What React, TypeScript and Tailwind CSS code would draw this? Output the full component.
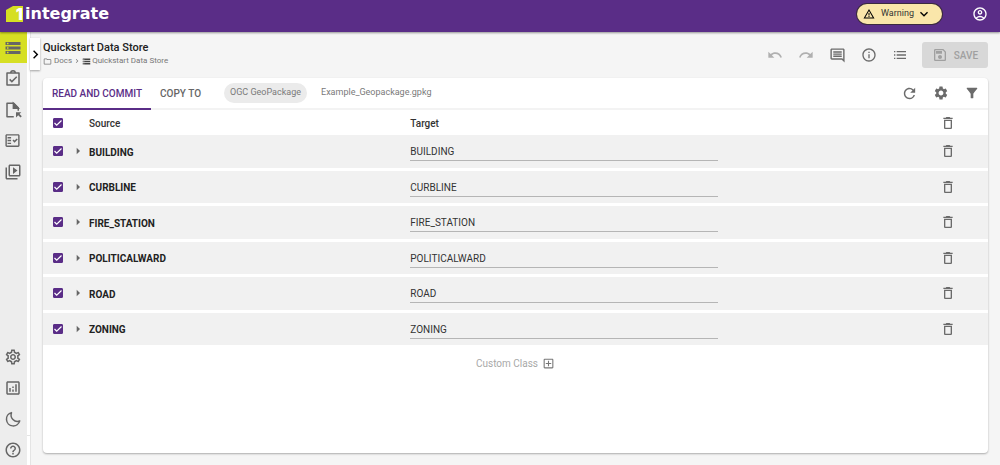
import { useState } from "react";
import type { ReactNode } from "react";
import {
  MdArrowRight,
  MdChevronRight,
  MdDeleteOutline,
  MdFilterAlt,
  MdHelpOutline,
  MdKeyboardArrowDown,
  MdOutlineAccountCircle,
  MdOutlineAddBox,
  MdOutlineAnalytics,
  MdOutlineFactCheck,
  MdOutlineFolder,
  MdOutlineInfo,
  MdOutlineComment,
  MdOutlineSave,
  MdOutlineSettings,
  MdOutlineVideoLibrary,
  MdRedo,
  MdRefresh,
  MdSettings,
  MdStorage,
  MdUndo,
  MdWarningAmber,
} from "react-icons/md";

const classes = [
  "BUILDING",
  "CURBLINE",
  "FIRE_STATION",
  "POLITICALWARD",
  "ROAD",
  "ZONING",
];

const ClipboardIcon = () => (
  <svg width="18" height="18" viewBox="0 0 24 24" fill="none" stroke="currentColor" strokeWidth="2">
    <path d="M4 4h16v16H4z" strokeLinejoin="round" />
    <path d="M9 4a3 3 0 0 1 6 0" />
    <path d="M7.5 12.5l3 3L17 9" />
  </svg>
);

const FileArrowIcon = () => (
  <svg width="18" height="18" viewBox="0 0 24 24" fill="none" stroke="currentColor" strokeWidth="2">
    <path d="M13 21H4V3h9l6 6v4" strokeLinejoin="round" />
    <path d="M12.5 3v6.500H19z" fill="currentColor" />
    <path d="M16 15h7l-2.300 2.300 3 3-1.700 1.700-3-3L16 22z" fill="currentColor" stroke="none" />
  </svg>
);

const MoonIcon = () => (
  <svg width="18" height="18" viewBox="0 0 24 24" fill="none" stroke="currentColor" strokeWidth="2">
    <path d="M10 3.500a9 9 0 1 0 11 11A8.500 8.500 0 0 1 10 3.500z" strokeLinejoin="round" />
  </svg>
);

const ListIcon = () => (
  <svg width="16" height="16" viewBox="0 0 24 24" fill="currentColor">
    <path d="M3 6h2v2H3zM3 11h2v2H3zM3 16h2v2H3zM7 6h14v2H7zM7 11h14v2H7zM7 16h14v2H7z" />
  </svg>
);

type NavButtonProps = {
  label: string;
  active?: boolean;
  children: ReactNode;
};

const NavButton = ({ label, active, children }: NavButtonProps) => (
  <button
    type="button"
    aria-label={label}
    className={`flex h-[31px] w-full items-center justify-center pr-0.5 text-[#666] ${
      active ? "bg-[#d6df23]" : ""
    }`}
  >
    {children}
  </button>
);

type CheckProps = {
  label: string;
  checked: boolean;
  onChange: () => void;
};

const Check = ({ label, checked, onChange }: CheckProps) => (
  <label className="relative block size-2.5">
    <input
      type="checkbox"
      aria-label={label}
      checked={checked}
      onChange={onChange}
      className="block size-2.5 appearance-none rounded-[1px] border border-[#5a2d87] checked:bg-[#5a2d87]"
    />
    {checked && (
      <svg
        viewBox="0 0 10 10"
        className="pointer-events-none absolute inset-0 size-2.5"
        fill="none"
        stroke="white"
        strokeWidth="1.200"
      >
        <path d="M1.500 5l2.200 2.200L8.500 2.500" />
      </svg>
    )}
  </label>
);

const Logo = () => (
  <a href="#" aria-label="1integrate" className="flex items-center gap-0.5 text-white">
    <span className="relative flex h-4 w-[17px] items-end justify-end">
      <svg viewBox="0 0 17 16" className="absolute inset-0 h-4 w-[17px]">
        <path d="M0 4 7 0h10v16H0z" fill="#d6df23" />
      </svg>
      <span className="relative font-[Inter] text-base leading-4 font-black">1</span>
    </span>
    <span className="font-['DejaVu_Sans'] text-base leading-4 font-bold">integrate</span>
  </a>
);

export default function App() {
  const [selected, setSelected] = useState<string[]>(classes);

  const toggle = (name: string) => {
    setSelected((prev) =>
      prev.includes(name) ? prev.filter((n) => n !== name) : [...prev, name],
    );
  };

  const allSelected = selected.length === classes.length;

  return (
    <div className="flex h-screen flex-col bg-[#f5f5f5] font-[Roboto,sans-serif] text-[#333]">
      {/* Top bar */}
      <header className="z-10 flex h-8 shrink-0 items-center justify-between bg-[#5a2d87] pr-3 pb-1 pl-1.5 shadow-[0_1px_2px_rgba(0,0,0,0.4)]">
        <Logo />
        <div className="flex items-center gap-[30px]">
          <button
            type="button"
            className="flex h-5 items-center rounded-full bg-[#fae6aa] pr-2.5 pl-1.5 text-[9px] text-[#333] ring-1 ring-[#3b2a3f]"
          >
            <MdWarningAmber size={12} className="text-black" />
            <span className="mr-0.5 ml-1.5">Warning</span>
            <MdKeyboardArrowDown size={16} className="text-black" />
          </button>
          <button type="button" aria-label="Account" className="text-white">
            <MdOutlineAccountCircle size={16} />
          </button>
        </div>
      </header>

      <div className="flex min-h-0 flex-1">
        {/* Sidebar */}
        <nav className="flex w-[27px] shrink-0 flex-col justify-between bg-[#ededed]">
          <div>
            <NavButton label="Data stores" active>
              <MdStorage size={18} />
            </NavButton>
            <NavButton label="Rules">
              <ClipboardIcon />
            </NavButton>
            <NavButton label="Actions">
              <FileArrowIcon />
            </NavButton>
            <NavButton label="Action maps">
              <MdOutlineFactCheck size={17} />
            </NavButton>
            <NavButton label="Sessions">
              <MdOutlineVideoLibrary size={18} />
            </NavButton>
          </div>
          <div>
            <NavButton label="Settings">
              <MdOutlineSettings size={18} />
            </NavButton>
            <NavButton label="Reports">
              <MdOutlineAnalytics size={18} />
            </NavButton>
            <NavButton label="Dark mode">
              <MoonIcon />
            </NavButton>
            <NavButton label="Help">
              <MdHelpOutline size={18} />
            </NavButton>
          </div>
        </nav>

        {/* Collapsed panel */}
        <aside className="relative flex w-1 shrink-0 flex-col justify-end border-r border-[#e4e4e4] bg-white">
          <div className="h-[30px] border-t border-[#e4e4e4]" />
          <button
            type="button"
            aria-label="Expand panel"
            className="absolute top-1.5 left-[3px] flex h-8 w-2.5 items-center justify-center bg-white text-black shadow-[0_1px_2px_rgba(0,0,0,0.35)]"
          >
            <MdChevronRight size={17} className="shrink-0" />
          </button>
        </aside>

        <main className="flex min-w-0 flex-1 flex-col pr-3 pb-3 pl-3">
          {/* Title and page actions */}
          <div className="flex h-[46px] shrink-0 items-center justify-between">
            <div className="pb-1">
              <h1 className="text-[11px] leading-4 font-medium text-[#222]">
                Quickstart Data Store
              </h1>
              <div className="flex items-center text-[8px] leading-2.5 text-[#777]">
                <MdOutlineFolder size={9} />
                <a href="#" className="ml-0.5">
                  Docs
                </a>
                <MdChevronRight size={8} className="mx-px" />
                <MdStorage size={9} className="text-[#444]" />
                <a href="#" className="ml-px">
                  Quickstart Data Store
                </a>
              </div>
            </div>
            <div className="flex items-center text-[#6b6b6b]">
              <div className="mr-3.5 flex items-center gap-[15px]">
                <button type="button" aria-label="Undo" disabled className="text-[#b0b0b0]">
                  <MdUndo size={16} />
                </button>
                <button type="button" aria-label="Redo" disabled className="text-[#b0b0b0]">
                  <MdRedo size={16} />
                </button>
                <button type="button" aria-label="Comments">
                  <MdOutlineComment size={17} />
                </button>
                <button type="button" aria-label="Information">
                  <MdOutlineInfo size={16} />
                </button>
                <button type="button" aria-label="List">
                  <ListIcon />
                </button>
              </div>
              <button
                type="button"
                disabled
                className="flex h-[26px] w-[66px] items-center justify-center gap-1.5 rounded-[3px] bg-[#d8d8d8] text-[10px] font-medium text-[#a0a0a0]"
              >
                <MdOutlineSave size={16} />
                SAVE
              </button>
            </div>
          </div>

          {/* Class mapping card */}
          <section className="flex min-h-0 flex-1 flex-col overflow-hidden rounded bg-white shadow-[0_1px_2px_rgba(0,0,0,0.3)]">
            <div className="flex h-8 shrink-0 items-center justify-between border-b-2 border-[#f3f3f3]">
              <div className="flex items-center self-stretch">
                <div role="tablist" className="-mb-0.5 flex self-stretch text-[10px] font-medium">
                  <button
                    type="button"
                    role="tab"
                    aria-selected="true"
                    className="border-b-2 border-[#5a2d87] px-[9px] text-[#5a2d87]"
                  >
                    READ AND COMMIT
                  </button>
                  <button
                    type="button"
                    role="tab"
                    aria-selected="false"
                    className="border-b-2 border-transparent px-[9px] text-[#666]"
                  >
                    COPY TO
                  </button>
                </div>
                <span className="ml-3.5 flex h-5 items-center rounded-full bg-[#ebebeb] px-1.5 text-[9px] text-[#7a7a7a]">
                  OGC GeoPackage
                </span>
                <span className="ml-3.5 text-[9px] text-[#7a7a7a]">Example_Geopackage.gpkg</span>
              </div>
              <div className="flex items-center gap-[15px] pr-2 text-[#6b6b6b]">
                <button type="button" aria-label="Refresh">
                  <MdRefresh size={17} />
                </button>
                <button type="button" aria-label="Options">
                  <MdSettings size={16} />
                </button>
                <button type="button" aria-label="Filter">
                  <MdFilterAlt size={16} />
                </button>
              </div>
            </div>

            <table className="h-[238px] w-full shrink-0 table-fixed border-separate border-spacing-0 text-left text-[10px]">
              <colgroup>
                <col className="w-[27px]" />
                <col className="w-[19px]" />
                <col className="w-[34%]" />
                <col />
                <col className="w-[270px]" />
              </colgroup>
              <thead>
                <tr className="h-[25px]">
                  <th className="pl-2.5">
                    <Check
                      label="Select all"
                      checked={allSelected}
                      onChange={() => setSelected(allSelected ? [] : classes)}
                    />
                  </th>
                  <th />
                  <th className="pt-0.5 font-medium">Source</th>
                  <th className="pt-0.5 font-medium">Target</th>
                  <th className="pr-8">
                    <button
                      type="button"
                      aria-label="Delete all"
                      className="ml-auto block text-[#6b6b6b]"
                    >
                      <MdDeleteOutline size={16} />
                    </button>
                  </th>
                </tr>
              </thead>
              <tbody>
                {classes.map((name) => (
                  <tr key={name} className="*:border-b-3 *:border-white *:bg-[#f1f1f1]">
                    <td className="pl-2.5">
                      <Check
                        label={`Select ${name}`}
                        checked={selected.includes(name)}
                        onChange={() => toggle(name)}
                      />
                    </td>
                    <td>
                      <button
                        type="button"
                        aria-label={`Expand ${name}`}
                        className="block text-[#666]"
                      >
                        <MdArrowRight size={16} />
                      </button>
                    </td>
                    <td className="pt-0.5 font-bold text-[#222]">{name}</td>
                    <td>
                      <input
                        type="text"
                        aria-label={`Target for ${name}`}
                        defaultValue={name}
                        className="block h-5 w-full border-b border-[#b5b5b5] pt-0.5 outline-none"
                      />
                    </td>
                    <td className="pr-8">
                      <button
                        type="button"
                        aria-label={`Delete ${name}`}
                        className="ml-auto block text-[#6b6b6b]"
                      >
                        <MdDeleteOutline size={16} />
                      </button>
                    </td>
                  </tr>
                ))}
              </tbody>
            </table>

            <button
              type="button"
              className="mx-auto mt-2 flex items-center gap-1 text-[10px] text-[#a8a8a8]"
            >
              Custom Class
              <MdOutlineAddBox size={13} className="text-[#777]" />
            </button>
          </section>
        </main>
      </div>
    </div>
  );
}
